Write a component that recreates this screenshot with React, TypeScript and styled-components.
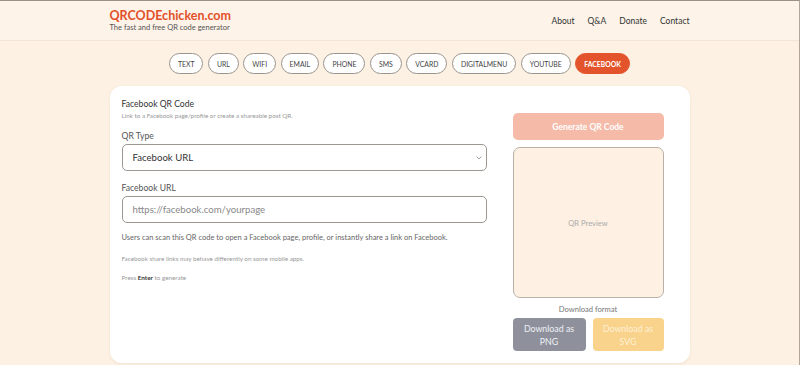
import React from "react";
import styled, { createGlobalStyle } from "styled-components";

const Global = createGlobalStyle`
  html, body { margin: 0; padding: 0; }
  body {
    background: #fdf1e3;
    font-family: "Lato", "Liberation Sans", sans-serif;
    color: #333;
  }
  * { box-sizing: border-box; }
`;

const Page = styled.div`
  min-height: 365px;
  height: 365px;
  overflow: hidden;
  border-top: 1px solid #9d9185;
  border-right: 1px solid #b3a698;
  background: #fdf1e3;
`;

const Header = styled.header`
  height: 40px;
  background: #fdf3e8;
  border-bottom: 1px solid #f3e6d8;
`;

const Inner = styled.div`
  width: 580px;
  margin: 0 auto;
`;

const HeaderInner = styled(Inner)`
  display: flex;
  align-items: center;
  justify-content: space-between;
  height: 100%;
  padding-bottom: 1px;
`;

const Brand = styled.div`
  display: flex;
  flex-direction: column;
`;

const Logo = styled.div`
  font-weight: 700;
  font-size: 12.5px;
  line-height: 14px;
  color: #e2502a;
`;

const Tagline = styled.div`
  font-size: 7.5px;
  line-height: 9px;
  color: #555;
`;

const Nav = styled.nav`
  display: flex;
  gap: 13px;
  margin-top: 2px;
`;

const NavLink = styled.a`
  font-size: 8.5px;
  color: #333;
  text-decoration: none;
`;

const Tabs = styled.div`
  display: flex;
  justify-content: center;
  gap: 4.5px;
  margin-top: 12px;
`;

const Tab = styled.button<{ $active?: boolean }>`
  height: 21px;
  padding: 0 8px;
  border-radius: 11px;
  border: 1px solid ${(p) => (p.$active ? "#e4542c" : "#9a948e")};
  background: ${(p) => (p.$active ? "#e4542c" : "#fff")};
  color: ${(p) => (p.$active ? "#fff" : "#444")};
  font-family: inherit;
  font-size: 6.85px;
  font-weight: ${(p) => (p.$active ? 700 : 400)};
  text-transform: uppercase;
`;

const Card = styled(Inner)`
  margin-top: 12px;
  background: #fff;
  border-radius: 12px;
  box-shadow: 0 1px 3px rgba(150, 120, 90, 0.12);
  height: 277px;
  display: grid;
  grid-template-columns: 365px 151px;
  column-gap: 26px;
  padding: 13px 26px 0 12px;
`;

const Left = styled.div`
  display: flex;
  flex-direction: column;
`;

const Title = styled.div`
  font-size: 8.6px;
  line-height: 11px;
  color: #333;
`;

const Sub = styled.div`
  font-size: 6.3px;
  line-height: 8px;
  color: #999;
  margin-top: 2px;
`;

const Label = styled.div<{ $top: number }>`
  font-size: 8.6px;
  line-height: 11px;
  color: #555;
  margin-top: ${(p) => p.$top}px;
`;

const Field = styled.div`
  margin-top: 2px;
  height: 27px;
  border: 1px solid #9e9892;
  border-radius: 5px;
  display: flex;
  align-items: center;
  justify-content: space-between;
  padding: 0 4px 0 10px;
  font-size: 9.6px;
`;

const FieldText = styled.span<{ $placeholder?: boolean }>`
  color: ${(p) => (p.$placeholder ? "#888" : "#333")};
`;

const Help = styled.div`
  margin-top: 10px;
  font-size: 7.5px;
  line-height: 10px;
  color: #666;
`;

const Small = styled.div<{ $top: number }>`
  margin-top: ${(p) => p.$top}px;
  font-size: 6.3px;
  line-height: 8px;
  color: #999;
  b { color: #333; font-weight: 700; }
`;

const Right = styled.div`
  display: flex;
  flex-direction: column;
  padding-top: 14px;
`;

const Generate = styled.button`
  height: 27px;
  border: none;
  border-radius: 5px;
  background: #f5baa8;
  color: #fff;
  font-family: inherit;
  font-weight: 700;
  font-size: 8.5px;
`;

const Preview = styled.div`
  margin-top: 7px;
  height: 151px;
  border: 1px solid #b9b1a9;
  border-radius: 7px;
  background: #fef1e3;
  display: flex;
  align-items: center;
  justify-content: center;
  font-size: 7.6px;
  color: #aaa;
`;

const FormatLabel = styled.div`
  margin-top: 6px;
  text-align: center;
  font-size: 7.6px;
  line-height: 10px;
  color: #777;
`;

const DlRow = styled.div`
  margin-top: 4px;
  display: grid;
  grid-template-columns: 73px 71px;
  column-gap: 7px;
`;

const DlButton = styled.button<{ $bg: string; $fg: string }>`
  height: 33px;
  border: none;
  border-radius: 4px;
  background: ${(p) => p.$bg};
  color: ${(p) => p.$fg};
  font-family: inherit;
  font-size: 8.8px;
  line-height: 13px;
  padding: 0 10px;
`;

const Chevron = () => (
  <svg width="6" height="4" viewBox="0 0 6 4">
    <path d="M0.6 0.6 L3 3 L5.4 0.6" fill="none" stroke="#888" strokeWidth="0.8" />
  </svg>
);

const tabs = ["Text", "URL", "WiFi", "Email", "Phone", "SMS", "vCard", "DigitalMenu", "YouTube", "Facebook"];

export default function App() {
  return (
    <Page>
      <Global />
      <Header>
        <HeaderInner>
          <Brand>
            <Logo>QRCODEchicken.com</Logo>
            <Tagline>The fast and free QR code generator</Tagline>
          </Brand>
          <Nav>
            <NavLink>About</NavLink>
            <NavLink>Q&amp;A</NavLink>
            <NavLink>Donate</NavLink>
            <NavLink>Contact</NavLink>
          </Nav>
        </HeaderInner>
      </Header>
      <Tabs>
        {tabs.map((t) => (
          <Tab key={t} $active={t === "Facebook"}>
            {t}
          </Tab>
        ))}
      </Tabs>
      <Card>
        <Left>
          <Title>Facebook QR Code</Title>
          <Sub>Link to a Facebook page/profile or create a shareable post QR.</Sub>
          <Label $top={11}>QR Type</Label>
          <Field>
            <FieldText>Facebook URL</FieldText>
            <Chevron />
          </Field>
          <Label $top={12}>Facebook URL</Label>
          <Field>
            <FieldText $placeholder>https://facebook.com/yourpage</FieldText>
          </Field>
          <Help>Users can scan this QR code to open a Facebook page, profile, or instantly share a link on Facebook.</Help>
          <Small $top={12}>Facebook share links may behave differently on some mobile apps.</Small>
          <Small $top={11}>
            Press <b>Enter</b> to generate
          </Small>
        </Left>
        <Right>
          <Generate>Generate QR Code</Generate>
          <Preview>QR Preview</Preview>
          <FormatLabel>Download format</FormatLabel>
          <DlRow>
            <DlButton $bg="#8e919c" $fg="#eef0f4">Download as PNG</DlButton>
            <DlButton $bg="#f9d38b" $fg="#fdf0d6">Download as SVG</DlButton>
          </DlRow>
        </Right>
      </Card>
    </Page>
  );
}
